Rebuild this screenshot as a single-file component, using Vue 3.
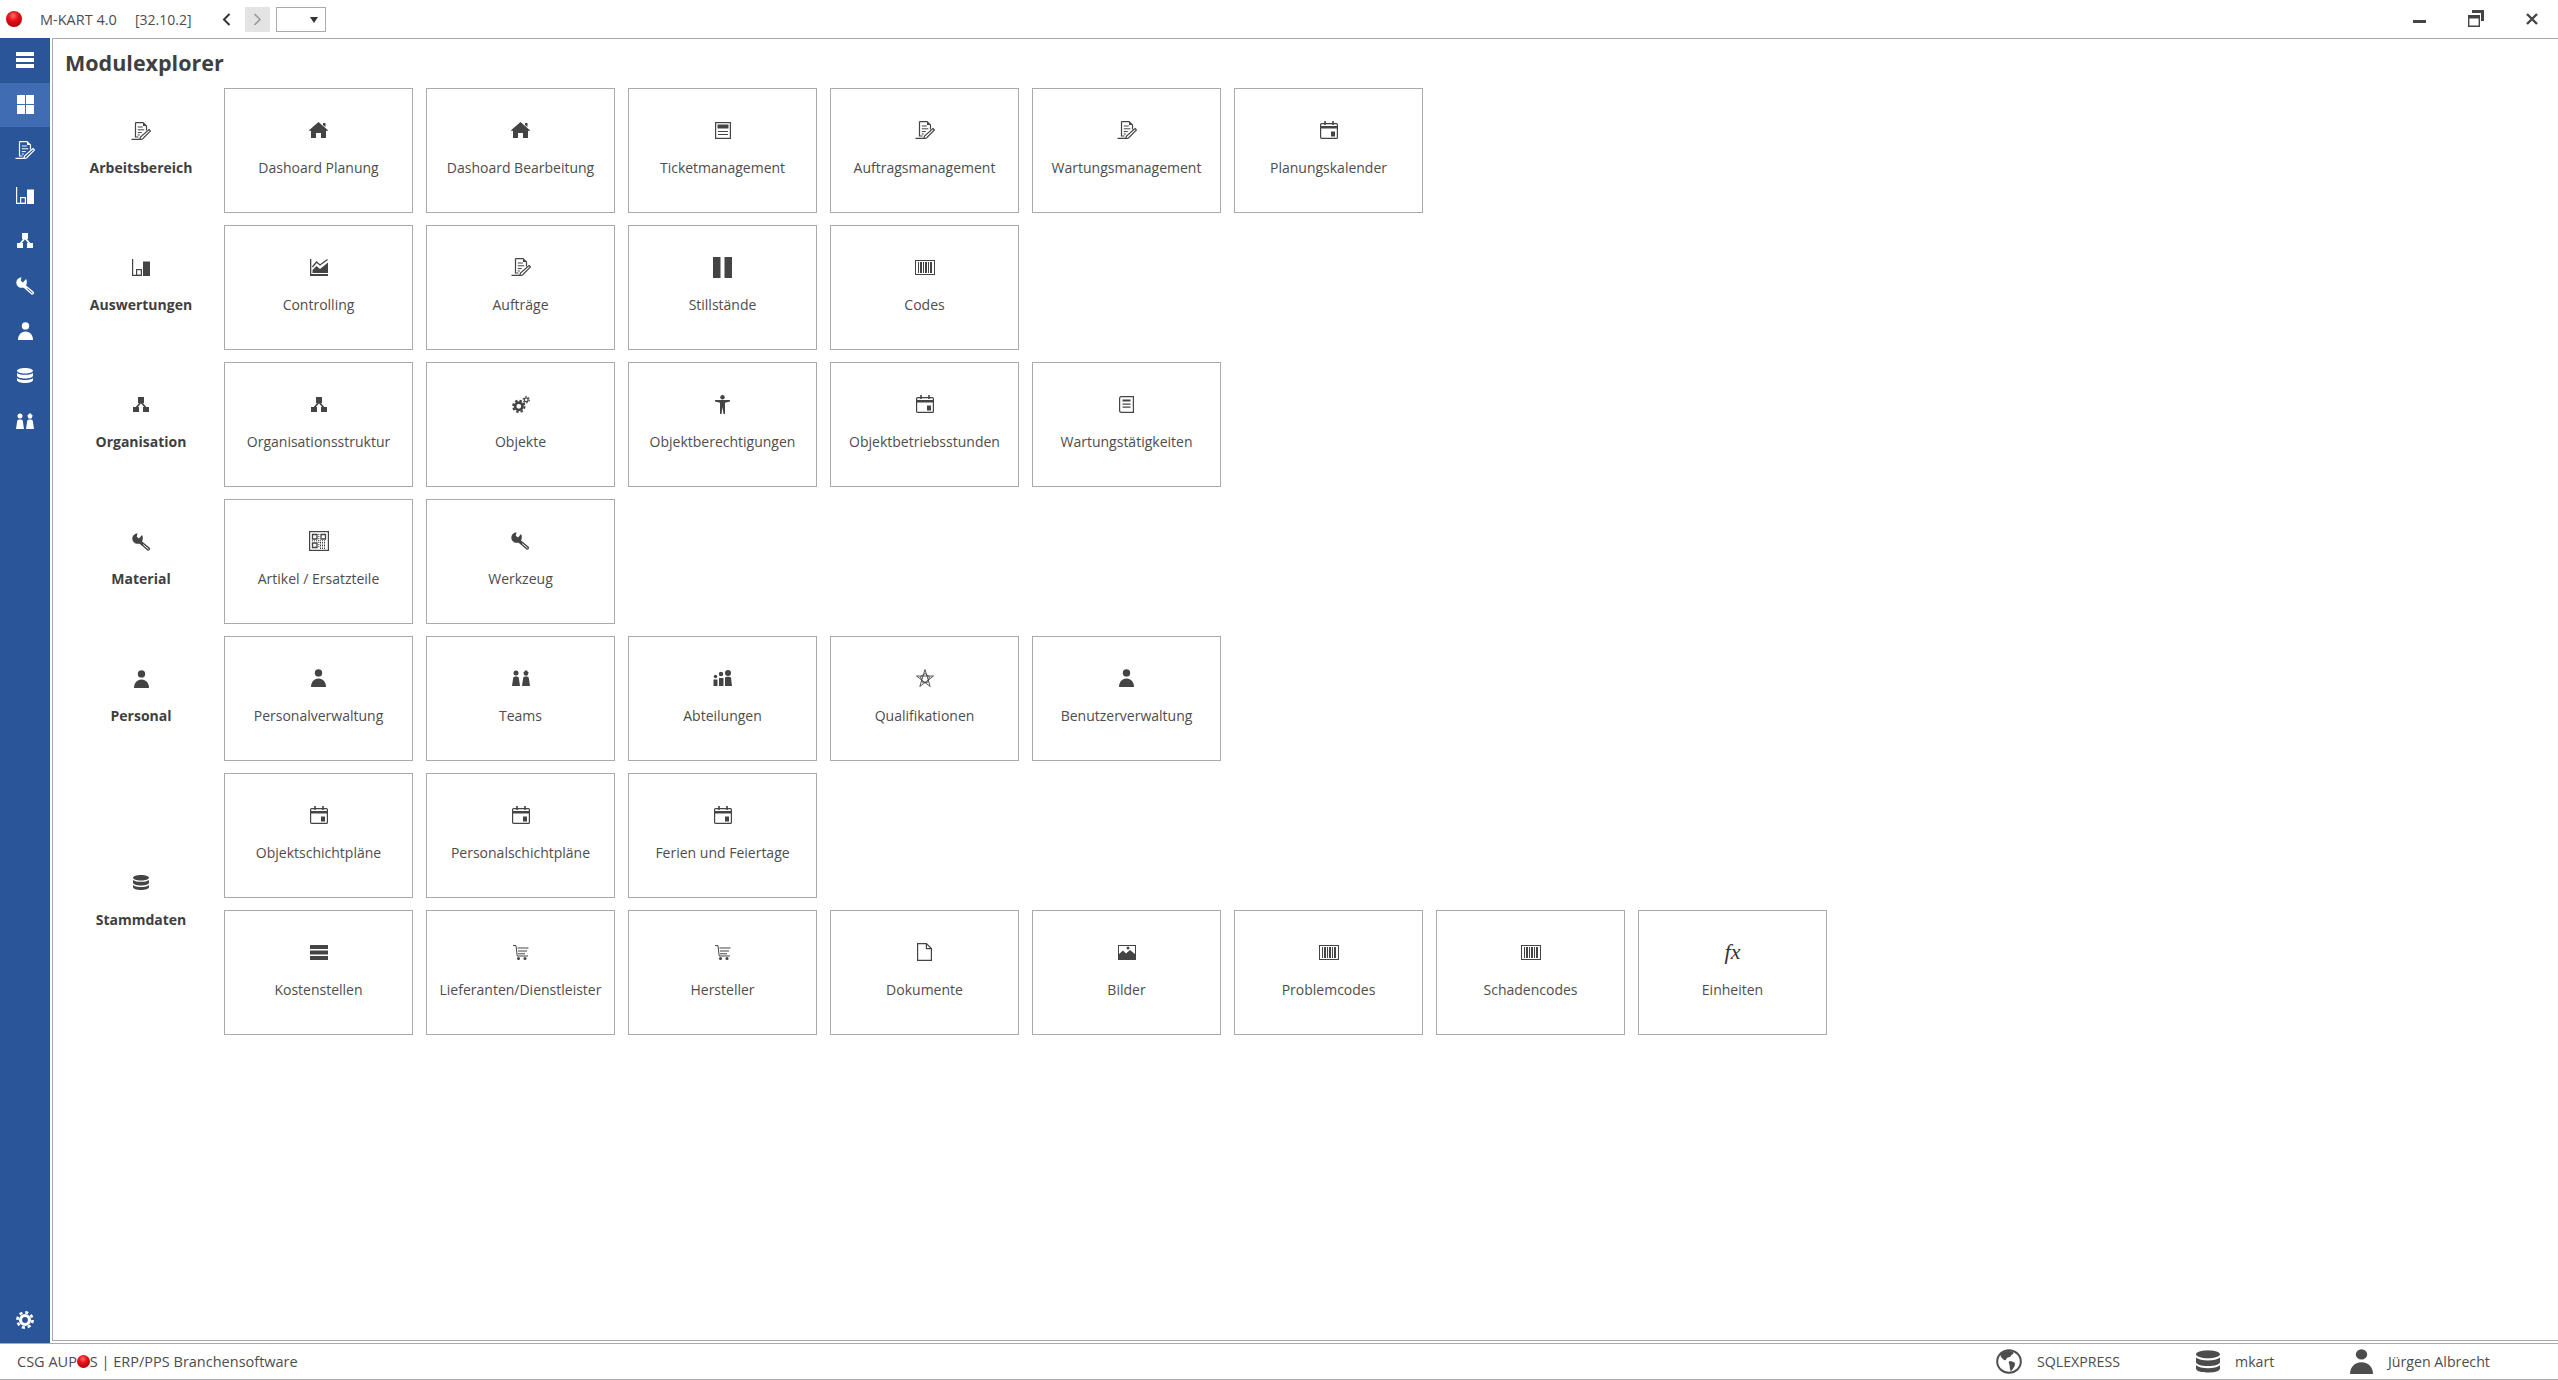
<template>
  <div class="app">
    <!-- icon sprite -->
    <svg class="sprite" xmlns="http://www.w3.org/2000/svg">
      <symbol id="i-doc" viewBox="0 0 20 18">
        <g fill="none" stroke="currentColor" stroke-width="1.200">
          <path d="M4.500.6h7.500l3.500 3.500v4.400M4.500.6V15h3M.5 17.400h9" />
          <path stroke-width="1" d="M6.800 5h5M6.800 7.800h6.500M6.800 10.600h4M6.800 13h2" />
          <path d="M18 7.500l1.500 1.500-8 8-2.800.8.800-2.800z" />
        </g>
        <path d="M12 .5v3.500h3.500z" fill="currentColor" />
      </symbol>
      <symbol id="i-home" viewBox="0 0 19 16">
        <path fill="currentColor" d="M9.500 0L19 8.200l-1 1.100-1-.8V16h-5v-5H7v5H2V8.500l-1 .8-1-1.100zM14 1h2.500v4L14 3z" />
      </symbol>
      <symbol id="i-bars" viewBox="0 0 18 17">
        <path d="M.6 0v16.400h9" fill="none" stroke="currentColor" stroke-width="1.200" />
        <rect x="4.600" y="10.600" width="4.800" height="5.800" fill="none" stroke="currentColor" stroke-width="1.200" />
        <rect x="11" y="2.500" width="7" height="14.500" fill="currentColor" />
      </symbol>
      <symbol id="i-chart" viewBox="0 0 18 17">
        <path fill="currentColor" d="M0 0h1.300v15H18v2H0zM2.500 14v-3l4-4 3.500 3 8-6.500V14z" />
        <path d="M2.500 8l4-5 3.500 3 7.500-5.500" fill="none" stroke="currentColor" stroke-width="1.300" />
      </symbol>
      <symbol id="i-org" viewBox="0 0 16 15">
        <path fill="currentColor" d="M5 0h6v6H5zM0 10h6v5H0zM10 10h6v5h-6z" />
        <path d="M8 5l-5 6M8 5l5 6" fill="none" stroke="currentColor" stroke-width="1.800" />
      </symbol>
      <symbol id="i-gears" viewBox="0 0 18 17">
        <g fill="none" stroke="currentColor">
          <circle cx="6.800" cy="10.300" r="3.700" stroke-width="2.600" />
          <circle cx="6.800" cy="10.300" r="5.700" stroke-width="2" stroke-dasharray="2.400 2.080" />
          <circle cx="14.200" cy="3.800" r="1.900" stroke-width="1.200" />
          <circle cx="14.200" cy="3.800" r="3.100" stroke-width="1.200" stroke-dasharray="1.600 1.650" />
        </g>
      </symbol>
      <symbol id="i-access" viewBox="0 0 15 19">
        <circle cx="7.500" cy="2.200" r="2.200" fill="currentColor" />
        <path fill="currentColor" d="M0 5h15v1.500l-5 1.200V19H8.500L7.500 12l-1 7H5V7.700L0 6.500z" />
      </symbol>
      <symbol id="i-cal" viewBox="0 0 18 18">
        <rect x=".6" y="2.600" width="16.800" height="14.800" rx="1" fill="none" stroke="currentColor" stroke-width="1.200" />
        <path fill="currentColor" d="M.6 5h16.800v2.400H.6zM11 10.500h4v5h-4z" />
        <path d="M5 0v4M13 0v4" stroke="currentColor" stroke-width="1.600" />
      </symbol>
      <symbol id="i-ticket" viewBox="0 0 16 17">
        <rect x=".6" y=".6" width="14.800" height="15.800" fill="none" stroke="currentColor" stroke-width="1.200" />
        <path fill="currentColor" d="M2.500 2.500h11v4h-11z" />
        <path d="M3 9.500h10M3 12.500h10" stroke="currentColor" stroke-width="1.200" />
      </symbol>
      <symbol id="i-journal" viewBox="0 0 15 17">
        <path d="M2.500.6h11.900v15.800H2.500C1.300 16.400.6 15.600.6 14.500V2.500C.6 1.400 1.300.6 2.500.6z" fill="none" stroke="currentColor" stroke-width="1.200" />
        <path d="M3.500 3.500h8v2h-8zM3.500 7.500h8v1.200h-8zM3.500 10.500h8v1.200h-8z" fill="currentColor" />
      </symbol>
      <symbol id="i-pause" viewBox="0 0 19 21">
        <path fill="currentColor" d="M0 0h7.500v21H0zM11.500 0H19v21h-7.500z" />
      </symbol>
      <symbol id="i-barcode" viewBox="0 0 20 15">
        <rect x=".5" y=".5" width="19" height="14" fill="none" stroke="currentColor" stroke-width="1" />
        <path stroke="currentColor" stroke-width="1" d="M3.500 2v11M5.500 2v11M6.500 2v11M8.500 2v11M10.500 2v11M11.500 2v11M13.500 2v11M15.500 2v11M16.500 2v11" />
      </symbol>
      <symbol id="i-qr" viewBox="0 0 20 20">
        <rect x=".6" y=".6" width="18.800" height="18.800" fill="none" stroke="currentColor" stroke-width="1.200" />
        <g fill="none" stroke="currentColor">
          <path stroke-width="1.300" d="M3.500 3.500h4.500v4.500H3.500zM12 3.500h4.500v4.500H12zM3.500 12h4.500v4.500H3.500z" />
          <path stroke-width="1" stroke-dasharray="1 1" d="M11 11.500h6M11 13h6M11 14.500h6M11 16h6M11 17.500h6M9.800 3v14M3 9.800h14" />
        </g>
      </symbol>
      <symbol id="i-wrench" viewBox="0 0 19 18">
        <path fill="currentColor" d="M5.500.2C2.500.6.300 2.800.3 5.600c0 2 1 3.700 2.700 4.600 1.500.8 3 .8 4.400.3l.8-.3 2.200-2.500.2-.9c.5-1.600.3-3.300-.6-4.700L7 5.500 4.800 3.800z" />
        <path d="M7.500 8.500l8.800 7.400" fill="none" stroke="currentColor" stroke-width="3.400" stroke-linecap="round" />
        <path d="M11.500 11.900l4.800 4" fill="none" stroke="var(--ico-bg, #fff)" stroke-width="1" stroke-linecap="round" />
      </symbol>
      <symbol id="i-person" viewBox="0 0 15 18">
        <circle cx="7.500" cy="3.900" r="3.700" fill="currentColor" />
        <path fill="currentColor" d="M0 18c0-4.500 2.800-8.500 7.500-8.500S15 13.500 15 18z" />
      </symbol>
      <symbol id="i-teams" viewBox="0 0 18 16">
        <g fill="currentColor">
          <circle cx="4" cy="3" r="2.500" />
          <path d="M0 16l1.200-8c.2-1 1-1.500 2.800-1.500s2.600.5 2.800 1.500L8 16z" />
          <circle cx="14" cy="3.500" r="2.300" />
          <path d="M11 3h6L14 0zM10 16l1.200-8c.2-1 1-1.500 2.800-1.500s2.600.5 2.800 1.500L18 16z" />
        </g>
      </symbol>
      <symbol id="i-depts" viewBox="0 0 19 16">
        <g fill="currentColor">
          <circle cx="2.500" cy="6.500" r="1.700" />
          <path d="M.5 9.500h4V16h-4z" />
          <circle cx="8" cy="4" r="2.200" />
          <path d="M6 8h4.500v8H6z" />
          <circle cx="15" cy="3" r="3" />
          <path d="M12 7.500c.5-.5 1.500-.8 3-.8s2.500.3 3 .8l1 8.500h-7z" />
        </g>
      </symbol>
      <symbol id="i-star" viewBox="0 0 18 18">
        <g fill="none" stroke="currentColor" stroke-width=".9">
          <path d="M9 .5L14.200 17.500 .5 7h17L3.800 17.500z" />
          <path d="M9 4.500l4.500 3.300-1.800 5.500H6.300L4.500 7.800z" />
        </g>
      </symbol>
      <symbol id="i-db" viewBox="0 0 16 15">
        <path fill="currentColor" d="M8 0c4.400 0 8 1.200 8 2.700S12.400 5.400 8 5.400 0 4.200 0 2.700 3.600 0 8 0zM0 4.900C1.500 6.200 4.500 6.800 8 6.800s6.500-.6 8-1.900v2.900c0 1.600-3.600 2.700-8 2.700S0 9.400 0 7.800zM0 10c1.500 1.400 4.500 2 8 2s6.500-.6 8-2v2.200C16 13.800 12.400 15 8 15s-8-1.200-8-2.800z" />
      </symbol>
      <symbol id="i-stack" viewBox="0 0 18 15">
        <path fill="currentColor" d="M0 0h18v4H0zM0 5.500h18v4H0zM0 11h18v4H0z" />
      </symbol>
      <symbol id="i-cart" viewBox="0 0 16 15">
        <path d="M0 .6h3l1.200 10.400H15M4.500 3h11M5 6h9M5 8.800h7" fill="none" stroke="currentColor" stroke-width="1" />
        <circle cx="5.500" cy="13.500" r="1.500" fill="currentColor" />
        <circle cx="12" cy="13.500" r="1.500" fill="currentColor" />
      </symbol>
      <symbol id="i-file" viewBox="0 0 15 18">
        <path d="M.6.6h8.800l5 5v11.800H.6zM9.400.6v5h5" fill="none" stroke="currentColor" stroke-width="1.200" />
      </symbol>
      <symbol id="i-image" viewBox="0 0 18 15">
        <rect x=".5" y=".5" width="17" height="14" fill="none" stroke="currentColor" />
        <path fill="currentColor" d="M0 15v-5l5-4.500 3 3L12 5l6 5v5z" />
        <circle cx="10" cy="3" r="1.500" fill="currentColor" />
      </symbol>
      <symbol id="i-menu" viewBox="0 0 18 16">
        <path fill="currentColor" d="M0 0h18v4H0zM0 6h18v4H0zM0 12h18v4H0z" />
      </symbol>
      <symbol id="i-grid" viewBox="0 0 17 19">
        <path fill="currentColor" d="M0 0h8v9H0zM9 0h8v9H9zM0 10h8v9H0zM9 10h8v9H9z" />
      </symbol>
      <symbol id="i-gear" viewBox="0 0 18 18">
        <g fill="none" stroke="currentColor">
          <circle cx="9" cy="9" r="4.500" stroke-width="3.200" />
          <circle cx="9" cy="9" r="7.600" stroke-width="2.600" stroke-dasharray="3.100 2.870" />
        </g>
      </symbol>
      <symbol id="i-globe" viewBox="0 0 26 25">
        <ellipse cx="13" cy="12.500" rx="11.800" ry="11.300" fill="none" stroke="currentColor" stroke-width="2" />
        <path fill="currentColor" d="M8 3c3-1.500 7-1.200 9.500.5C18 5 15.500 5.500 14.500 7.500c-1 1.200-3 .2-4 2.200s-2 2-3 .8S4.500 8.500 4.500 6.500 6 4 8 3zM13 12.500c2-.5 4 0 5.500 1.300 1 1.200.5 3-.8 4.700-1 1.500-2 3.500-3 3.500-.7-2-1-3-1-5s-1.700-3-.7-4.500z" />
      </symbol>
    </svg>

    <header class="titlebar">
      <span class="ball"></span>
      <span class="app-name">M-KART 4.0</span>
      <span class="app-version">[32.10.2]</span>
      <svg class="nav-back" width="9" height="13" viewBox="0 0 9 13"><path d="M7.500 1L2 6.500 7.500 12" /></svg>
      <span class="nav-next">
        <svg width="9" height="13" viewBox="0 0 9 13"><path d="M1.500 1L7 6.500 1.500 12" /></svg>
      </span>
      <span class="combo"><i></i></span>
      <div class="win-buttons">
        <span class="win-min"></span>
        <svg class="win-restore" width="16" height="17" viewBox="0 0 16 17">
          <path d="M4 0h12v11h-3V3H4z" fill="#444" />
          <path d="M0 5h12v12H0z" fill="#fff" />
          <path d="M.7 5.700h10.600v10.600H.7z" fill="none" stroke="#444" stroke-width="1.400" />
          <path d="M0 5h12v3.500H0z" fill="#444" />
        </svg>
        <svg class="win-close" width="12" height="12" viewBox="0 0 12 12"><path d="M1 1l10 10M11 1L1 11" /></svg>
      </div>
    </header>

    <div class="body">
      <nav class="sidebar">
        <a v-for="(item, i) in sideItems" :key="i" class="side-item" :class="{ active: item === 'grid' }">
          <svg :width="sizes[item][0]" :height="sizes[item][1]"><use :href="'#i-' + item" /></svg>
        </a>
        <a class="side-item settings">
          <svg width="18" height="18"><use href="#i-gear" /></svg>
        </a>
      </nav>

      <main class="main">
        <h1 class="title">Modulexplorer</h1>
        <section v-for="group in groups" :key="group.name" class="group">
          <div class="group-head" :class="{ tall: group.rows.length > 1 }">
            <span class="card-icon">
              <svg :width="sizes[group.icon][0]" :height="sizes[group.icon][1]"><use :href="'#i-' + group.icon" /></svg>
            </span>
            <span class="group-name">{{ group.name }}</span>
          </div>
          <div class="group-rows">
            <div v-for="(row, r) in group.rows" :key="r" class="row">
              <div v-for="card in row" :key="card[0]" class="card">
                <span class="card-icon">
                  <span v-if="card[1] === 'fx'" class="fx">fx</span>
                  <svg v-else :width="sizes[card[1]][0]" :height="sizes[card[1]][1]"><use :href="'#i-' + card[1]" /></svg>
                </span>
                <span class="card-label">{{ card[0] }}</span>
              </div>
            </div>
          </div>
        </section>
      </main>
    </div>

    <footer class="statusbar">
      <span class="brand">CSG AUP<span class="ball small"></span>S | ERP/PPS Branchensoftware</span>
      <span class="st-item st-server">
        <svg width="26" height="25"><use href="#i-globe" /></svg>SQLEXPRESS
      </span>
      <span class="st-item st-db">
        <svg width="24" height="23" viewBox="0 0 16 15"><use href="#i-db" width="16" height="15" /></svg>mkart
      </span>
      <span class="st-item st-user">
        <svg width="23" height="25" viewBox="0 0 15 18" preserveAspectRatio="none"><use href="#i-person" width="15" height="18" /></svg>Jürgen Albrecht
      </span>
    </footer>
  </div>
</template>

<script setup>
const sizes = {
  doc: [20, 18],
  home: [19, 16],
  bars: [18, 17],
  chart: [18, 17],
  org: [16, 15],
  gears: [18, 17],
  access: [15, 19],
  cal: [18, 18],
  ticket: [16, 17],
  journal: [15, 17],
  pause: [19, 21],
  barcode: [20, 15],
  qr: [20, 20],
  wrench: [19, 18],
  person: [15, 18],
  teams: [18, 16],
  depts: [19, 16],
  star: [18, 18],
  db: [16, 15],
  stack: [18, 15],
  cart: [16, 15],
  file: [15, 18],
  image: [18, 15],
  menu: [18, 16],
  grid: [17, 19],
};

const sideItems = ["menu", "grid", "doc", "bars", "org", "wrench", "person", "db", "teams"];

const groups = [
  {
    name: "Arbeitsbereich",
    icon: "doc",
    rows: [
      [
        ["Dashoard Planung", "home"],
        ["Dashoard Bearbeitung", "home"],
        ["Ticketmanagement", "ticket"],
        ["Auftragsmanagement", "doc"],
        ["Wartungsmanagement", "doc"],
        ["Planungskalender", "cal"],
      ],
    ],
  },
  {
    name: "Auswertungen",
    icon: "bars",
    rows: [
      [
        ["Controlling", "chart"],
        ["Aufträge", "doc"],
        ["Stillstände", "pause"],
        ["Codes", "barcode"],
      ],
    ],
  },
  {
    name: "Organisation",
    icon: "org",
    rows: [
      [
        ["Organisationsstruktur", "org"],
        ["Objekte", "gears"],
        ["Objektberechtigungen", "access"],
        ["Objektbetriebsstunden", "cal"],
        ["Wartungstätigkeiten", "journal"],
      ],
    ],
  },
  {
    name: "Material",
    icon: "wrench",
    rows: [
      [
        ["Artikel / Ersatzteile", "qr"],
        ["Werkzeug", "wrench"],
      ],
    ],
  },
  {
    name: "Personal",
    icon: "person",
    rows: [
      [
        ["Personalverwaltung", "person"],
        ["Teams", "teams"],
        ["Abteilungen", "depts"],
        ["Qualifikationen", "star"],
        ["Benutzerverwaltung", "person"],
      ],
    ],
  },
  {
    name: "Stammdaten",
    icon: "db",
    rows: [
      [
        ["Objektschichtpläne", "cal"],
        ["Personalschichtpläne", "cal"],
        ["Ferien und Feiertage", "cal"],
      ],
      [
        ["Kostenstellen", "stack"],
        ["Lieferanten/Dienstleister", "cart"],
        ["Hersteller", "cart"],
        ["Dokumente", "file"],
        ["Bilder", "image"],
        ["Problemcodes", "barcode"],
        ["Schadencodes", "barcode"],
        ["Einheiten", "fx"],
      ],
    ],
  },
];
</script>

<style>
html,
body {
  margin: 0;
  background: #fff;
  overflow: hidden;
}
</style>

<style scoped>
.app {
  width: 2558px;
  height: 1380px;
  display: flex;
  flex-direction: column;
  font-family: "Open Sans", "Noto Sans", sans-serif;
  color: #4d4d4d;
  background: #fff;
}
.sprite {
  position: absolute;
  width: 0;
  height: 0;
}
svg {
  display: block;
}

/* title bar */
.titlebar {
  height: 38px;
  flex: none;
  display: flex;
  align-items: center;
  font-size: 14.500px;
}
.ball {
  display: block;
  width: 16px;
  height: 16px;
  margin-left: 6px;
  border-radius: 50%;
  background: radial-gradient(circle at 45% 30%, #ff6a6a 0, #e8101a 35%, #b00008 80%, #8a0006 100%);
}
.ball.small {
  display: inline-block;
  width: 13px;
  height: 13px;
  margin: 0;
  vertical-align: -1px;
}
.app-name {
  margin-left: 18px;
  width: 95px;
  white-space: nowrap;
}
.app-version {
  width: 87px;
  font-size: 14px;
  white-space: nowrap;
}
.nav-back {
  fill: none;
  stroke: #333;
  stroke-width: 2;
}
.nav-next {
  width: 25px;
  height: 25px;
  margin-left: 14px;
  background: #e3e3e3;
  display: flex;
  align-items: center;
  justify-content: center;
}
.nav-next svg {
  fill: none;
  stroke: #999;
  stroke-width: 1.600;
}
.combo {
  box-sizing: border-box;
  width: 50px;
  height: 25px;
  margin-left: 6px;
  border: 1px solid #aaa;
  position: relative;
}
.combo i {
  position: absolute;
  right: 7px;
  top: 9px;
  border-left: 4px solid transparent;
  border-right: 4px solid transparent;
  border-top: 6px solid #333;
}
.win-buttons {
  margin-left: auto;
  display: flex;
  align-items: center;
}
.win-min {
  width: 13px;
  height: 3px;
  margin-top: 4px;
  background: #444;
}
.win-restore {
  margin-left: 42px;
  margin-top: -1px;
}
.win-close {
  margin-left: 42px;
  margin-right: 20px;
  fill: none;
  stroke: #444;
  stroke-width: 2.400;
}

.body {
  flex: 1;
  display: flex;
  min-height: 0;
}

/* side navigation */
.sidebar {
  width: 50px;
  flex: none;
  display: flex;
  flex-direction: column;
  background: #2a5599;
  color: #fff;
  --ico-bg: #2a5599;
}
.side-item {
  box-sizing: border-box;
  height: 45px;
  flex: none;
  display: flex;
  align-items: center;
  justify-content: center;
}
.side-item:nth-child(1) {
  padding-bottom: 1px;
}
.side-item:nth-child(2) {
  height: 44px;
  padding-bottom: 1px;
}
.side-item:nth-child(3) {
  height: 46px;
}
.side-item.active {
  background: #3f6cb3;
  --ico-bg: #3f6cb3;
}
.settings {
  margin-top: auto;
  margin-bottom: 1px;
}

/* module grid */
.main {
  flex: 1;
  box-sizing: border-box;
  margin: 0 0 2px 2px;
  border: 1px solid #aaa;
  border-width: 1px 0 1px 1px;
  padding-left: 5px;
}
.title {
  margin: 9px 0 10px 7px;
  font-size: 21.500px;
  line-height: 30px;
  font-weight: 700;
  color: #3f3f3f;
}
.group {
  display: flex;
  margin-bottom: 12px;
}
.group-head {
  width: 166px;
  flex: none;
  box-sizing: border-box;
  display: flex;
  flex-direction: column;
  align-items: center;
  justify-content: center;
  padding-bottom: 5px;
}
.group-head.tall {
  padding-bottom: 8px;
}
.group-head.tall .card-icon {
  margin-bottom: 16px;
}
.group-name {
  font-size: 14px;
  line-height: 20px;
  font-weight: 700;
  color: #3f3f3f;
}
.group-rows {
  display: flex;
  flex-direction: column;
  gap: 12px;
}
.row {
  display: flex;
  gap: 13px;
}
.card {
  box-sizing: border-box;
  width: 189px;
  height: 125px;
  border: 1px solid #aaa;
  padding-top: 29px;
  display: flex;
  flex-direction: column;
  align-items: center;
}
.card-icon {
  height: 24px;
  margin-bottom: 15px;
  display: flex;
  align-items: center;
  justify-content: center;
  color: #444;
}
.fx {
  font-family: "Liberation Serif", serif;
  font-style: italic;
  font-size: 22px;
  color: #333;
}
.card-label {
  font-size: 14px;
  line-height: 20px;
  white-space: nowrap;
  position: relative;
  top: 1px;
}

/* status bar */
.statusbar {
  height: 37px;
  flex: none;
  box-sizing: border-box;
  border-top: 1px solid #aaa;
  border-bottom: 1px solid #aaa;
  display: flex;
  align-items: center;
  font-size: 14.200px;
}
.brand {
  margin-left: 17px;
  margin-right: auto;
  font-size: 14.500px;
  white-space: nowrap;
}
.st-item {
  display: flex;
  align-items: center;
  gap: 15px;
  white-space: nowrap;
  box-sizing: border-box;
}
.st-server {
  width: 200px;
}
.st-db {
  width: 154px;
}
.st-user {
  width: 208px;
}
</style>
